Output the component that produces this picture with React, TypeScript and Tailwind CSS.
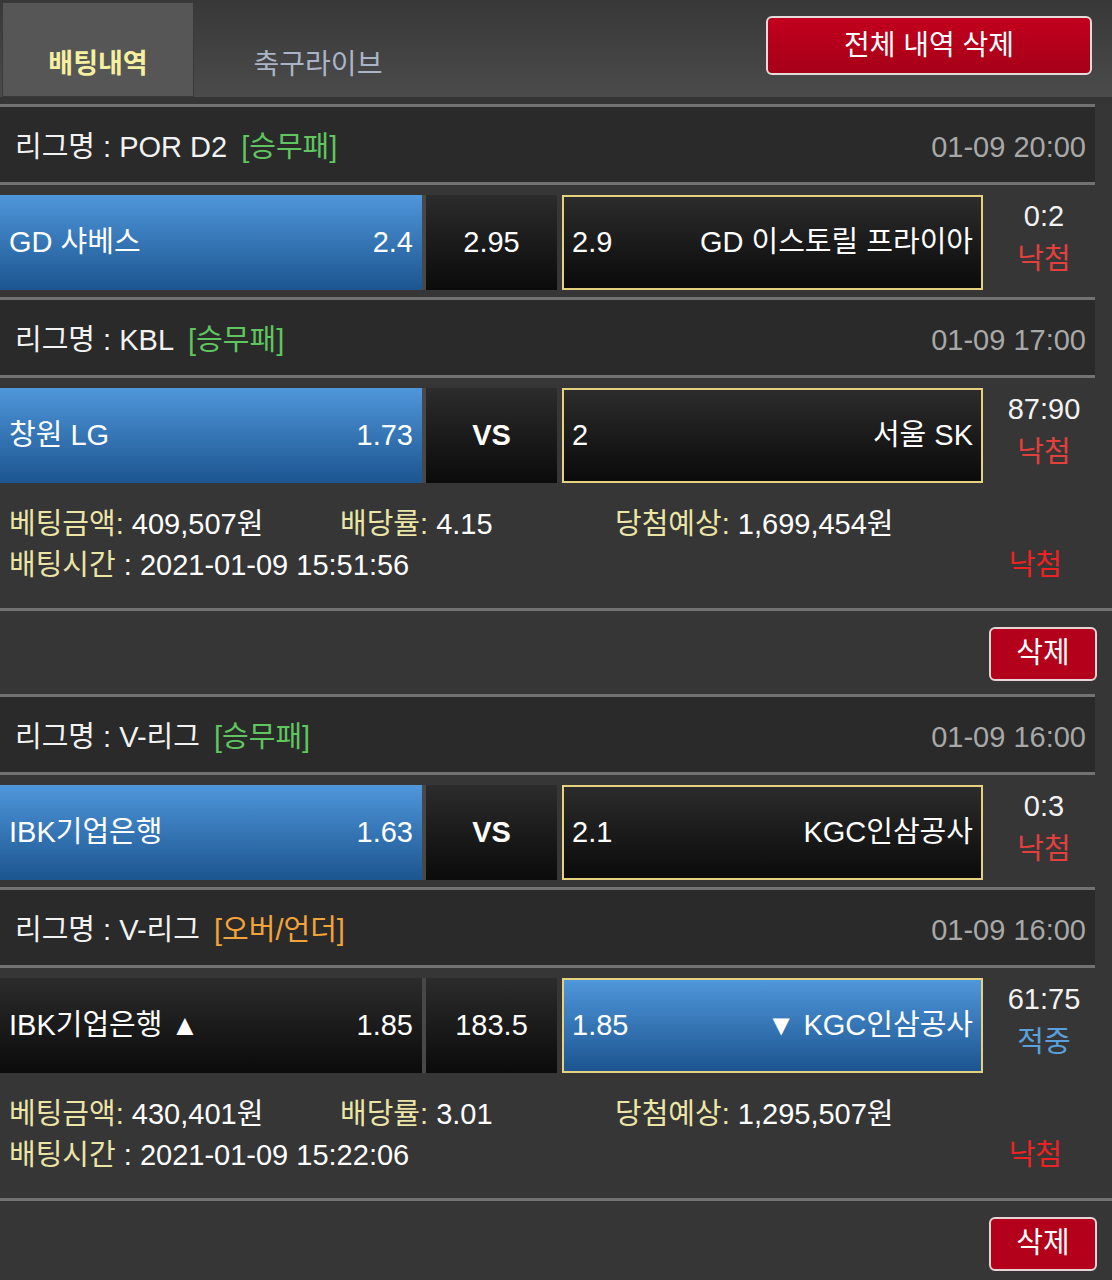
import React from 'react';

interface Match {
  league: string;
  type: string;
  typeColor: string;
  time: string;
  home: string;
  homeOdds: string;
  homeBlue: boolean;
  mid: string;
  midBold?: boolean;
  away: string;
  awayOdds: string;
  awayBlue: boolean;
  score: string;
  result: string;
}

interface Bet {
  matches: Match[];
  amount: string;
  rate: string;
  expected: string;
  time: string;
  result: string;
}

const bets: Bet[] = [
  {
    matches: [
      {
        league: 'POR D2',
        type: '[승무패]',
        typeColor: 'text-[#5fc65f]',
        time: '01-09 20:00',
        home: 'GD 샤베스',
        homeOdds: '2.4',
        homeBlue: true,
        mid: '2.95',
        away: 'GD 이스토릴 프라이아',
        awayOdds: '2.9',
        awayBlue: false,
        score: '0:2',
        result: '낙첨',
      },
      {
        league: 'KBL',
        type: '[승무패]',
        typeColor: 'text-[#5fc65f]',
        time: '01-09 17:00',
        home: '창원 LG',
        homeOdds: '1.73',
        homeBlue: true,
        mid: 'VS',
        midBold: true,
        away: '서울 SK',
        awayOdds: '2',
        awayBlue: false,
        score: '87:90',
        result: '낙첨',
      },
    ],
    amount: '409,507원',
    rate: '4.15',
    expected: '1,699,454원',
    time: '2021-01-09 15:51:56',
    result: '낙첨',
  },
  {
    matches: [
      {
        league: 'V-리그',
        type: '[승무패]',
        typeColor: 'text-[#5fc65f]',
        time: '01-09 16:00',
        home: 'IBK기업은행',
        homeOdds: '1.63',
        homeBlue: true,
        mid: 'VS',
        midBold: true,
        away: 'KGC인삼공사',
        awayOdds: '2.1',
        awayBlue: false,
        score: '0:3',
        result: '낙첨',
      },
      {
        league: 'V-리그',
        type: '[오버/언더]',
        typeColor: 'text-[#f2a33a]',
        time: '01-09 16:00',
        home: 'IBK기업은행 ▲',
        homeOdds: '1.85',
        homeBlue: false,
        mid: '183.5',
        away: '▼ KGC인삼공사',
        awayOdds: '1.85',
        awayBlue: true,
        score: '61:75',
        result: '적중',
      },
    ],
    amount: '430,401원',
    rate: '3.01',
    expected: '1,295,507원',
    time: '2021-01-09 15:22:06',
    result: '낙첨',
  },
];

const blueCell = 'bg-gradient-to-b from-[#4f97db] to-[#1c5590]';
const blackCell = 'bg-gradient-to-b from-[#2c2c2c] to-[#0b0b0b]';

const Divider = ({ full }: { full?: boolean }) => (
  <div className={`h-[3px] bg-[#727272] ${full ? 'w-full' : 'w-[1095px]'}`} />
);

const MatchBlock = ({ m }: { m: Match }) => (
  <>
    <div className="flex h-[75px] w-[1095px] items-center justify-between bg-[#2a2a2a] pl-[15px] pr-[9px] pt-[7px]">
      <div className="flex items-center text-[#f2f2f2]">
        <span>리그명 : {m.league}</span>
        <span className={`ml-[14px] ${m.typeColor}`}>{m.type}</span>
      </div>
      <span className="text-[#a8a8a8]">{m.time}</span>
    </div>
    <Divider />
    <div className="flex h-[112px] items-start pt-[10px]">
      <div
        className={`flex h-[95px] w-[422px] items-center justify-between pl-[9px] pr-[9px] text-white ${
          m.homeBlue ? blueCell : blackCell
        }`}
      >
        <span>{m.home}</span>
        <span>{m.homeOdds}</span>
      </div>
      <div className="h-[95px] w-[4px] bg-[#484848]" />
      <div className={`flex h-[95px] w-[131px] items-center justify-center text-white ${blackCell}`}>
        <span className={m.midBold ? 'font-bold' : ''}>{m.mid}</span>
      </div>
      <div className="w-[5px]" />
      <div
        className={`flex h-[95px] w-[421px] items-center justify-between border-2 border-[#e6d27e] pl-[8px] pr-[8px] text-white ${
          m.awayBlue ? blueCell : blackCell
        }`}
      >
        <span>{m.awayOdds}</span>
        <span>{m.away}</span>
      </div>
      <div className="flex w-[122px] flex-col items-center leading-[43px]">
        <span className="text-[#f2f2f2]">{m.score}</span>
        <span className={m.result === '적중' ? 'text-[#5aa0dc]' : 'text-[#e2403c]'}>{m.result}</span>
      </div>
    </div>
  </>
);

const BetGroup = ({ bet }: { bet: Bet }) => (
  <div>
    {bet.matches.map((m, i) => (
      <React.Fragment key={i}>
        <Divider />
        <MatchBlock m={m} />
      </React.Fragment>
    ))}
    <div className="h-[118px] pt-[14px] leading-[41px]">
      <div className="flex pl-[9px]">
        <div className="w-[331px]">
          <span className="text-[#ebe5a6]">베팅금액:</span> <span className="text-white">{bet.amount}</span>
        </div>
        <div className="w-[275px]">
          <span className="text-[#ebe5a6]">배당률:</span> <span className="text-white">{bet.rate}</span>
        </div>
        <div>
          <span className="text-[#ebe5a6]">당첨예상:</span> <span className="text-white">{bet.expected}</span>
        </div>
      </div>
      <div className="flex justify-between pl-[9px] pr-[50px]">
        <div>
          <span className="text-[#ebe5a6]">배팅시간</span>
          <span className="text-white"> : {bet.time}</span>
        </div>
        <span className="text-[#ee2222]">{bet.result}</span>
      </div>
    </div>
    <Divider full />
    <div className="flex h-[83px] justify-end pr-[15px] pt-[16px]">
      <button className="h-[54px] w-[108px] rounded-md border-2 border-[#e8d4d6] bg-[#b3001b] text-white">
        삭제
      </button>
    </div>
  </div>
);

export default function App() {
  return (
    <div className="min-h-[1280px] w-[1112px] overflow-hidden bg-[#363636] font-['Liberation_Sans','Noto_Sans_CJK_KR',sans-serif] text-[29px]">
      <div className="flex h-[104px] bg-[#353535]">
        <div className="flex h-[97px] w-full items-stretch bg-gradient-to-b from-[#383838] to-[#4b4b4b]">
          <div className="mt-[2px] ml-[2px] flex w-[192px] items-center justify-center border border-[#3a3a3a] bg-[#565656] pt-[30px] text-[27px] font-bold text-[#f4f0a0]">
            배팅내역
          </div>
          <div className="flex w-[248px] items-center justify-center pt-[32px] text-[28px] text-[#aab4c6]">
            축구라이브
          </div>
          <div className="flex flex-1 justify-end pr-[20px] pt-[16px]">
            <button className="h-[59px] w-[326px] rounded-md border-2 border-[#e4dcdc] bg-gradient-to-b from-[#c2001d] to-[#a60018] text-[28px] text-white">
              전체 내역 삭제
            </button>
          </div>
        </div>
      </div>
      {bets.map((b, i) => (
        <BetGroup key={i} bet={b} />
      ))}
    </div>
  );
}
